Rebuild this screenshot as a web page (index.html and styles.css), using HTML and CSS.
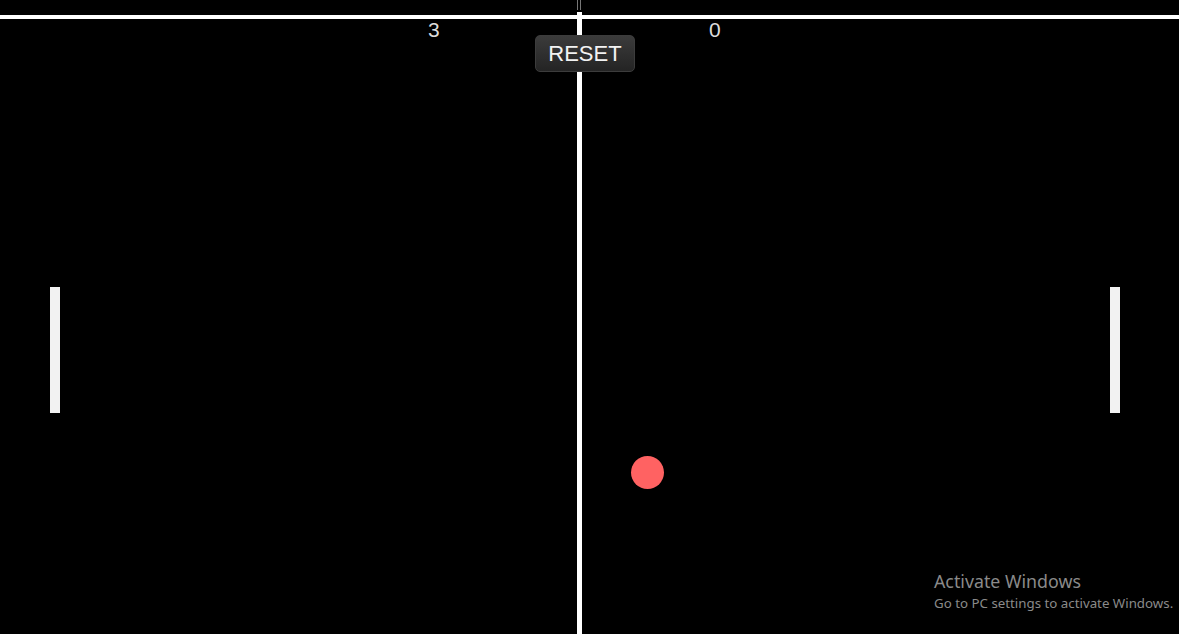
FILE: index.html
```html
<!DOCTYPE html>
<html>
<head>
<meta charset="utf-8">
<link rel="stylesheet" href="styles.css">
</head>
<body>
<div class="court">
  <div class="tick"></div>
  <div class="top-line"></div>
  <div class="mid-line"></div>
  <div class="score score-left">3</div>
  <div class="score score-right">0</div>
  <button class="reset">RESET</button>
  <div class="paddle paddle-left"></div>
  <div class="paddle paddle-right"></div>
  <div class="ball"></div>
  <div class="activate">
    <div class="act-title">Activate Windows</div>
    <div class="act-sub">Go to PC settings to activate Windows.</div>
  </div>
</div>
</body>
</html>
```

FILE: styles.css
```css
html, body {
  margin: 0;
  padding: 0;
  background: #000;
  width: 1179px;
  height: 634px;
  overflow: hidden;
}
.court {
  position: relative;
  width: 1179px;
  height: 634px;
  background: #000;
  font-family: "Liberation Sans", Arial, sans-serif;
}
.tick {
  position: absolute;
  left: 577px;
  top: 0;
  width: 4px;
  height: 10px;
  border-left: 1px solid #777;
  border-right: 1px solid #777;
  box-sizing: border-box;
}
.top-line {
  position: absolute;
  left: 0;
  top: 15px;
  width: 1179px;
  height: 4px;
  background: #fff;
}
.mid-line {
  position: absolute;
  left: 577px;
  top: 12px;
  width: 5px;
  height: 622px;
  background: #fff;
}
.score {
  position: absolute;
  top: 18px;
  font-size: 21px;
  line-height: 24px;
  color: #dcdcdc;
}
.score-left { left: 428px; }
.score-right { left: 709px; }
.reset {
  position: absolute;
  left: 535px;
  top: 35px;
  width: 100px;
  height: 37px;
  padding: 0;
  border: 1px solid #3c3c3c;
  border-radius: 5px;
  background: linear-gradient(#3b3b3b, #242424);
  color: #f2f2f2;
  font-family: "Liberation Sans", Arial, sans-serif;
  font-size: 22px;
  line-height: 35px;
  text-align: center;
}
.paddle {
  position: absolute;
  top: 287px;
  width: 10px;
  height: 126px;
  background: #f2f2f2;
}
.paddle-left { left: 50px; }
.paddle-right { left: 1110px; }
.ball {
  position: absolute;
  left: 631px;
  top: 456px;
  width: 33px;
  height: 33px;
  border-radius: 50%;
  background: #ff6262;
}
.activate {
  position: absolute;
  left: 934px;
  top: 570px;
  color: #8a8a8a;
  font-family: "Noto Sans", "Open Sans", sans-serif;
}
.act-title {
  font-size: 17.8px;
  line-height: 23px;
}
.act-sub {
  font-size: 13.3px;
  line-height: 20px;
}
```
